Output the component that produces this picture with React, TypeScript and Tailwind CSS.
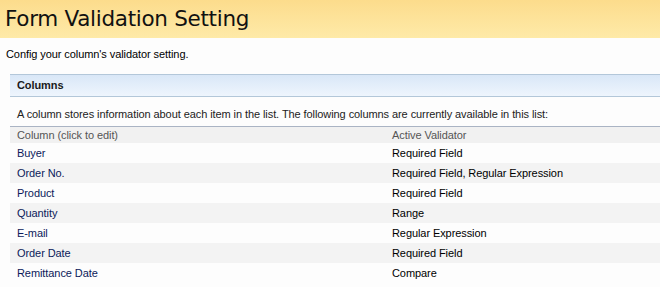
import React from 'react';

const rows = [
  { name: 'Buyer', validator: 'Required Field' },
  { name: 'Order No.', validator: 'Required Field, Regular Expression' },
  { name: 'Product', validator: 'Required Field' },
  { name: 'Quantity', validator: 'Range' },
  { name: 'E-mail', validator: 'Regular Expression' },
  { name: 'Order Date', validator: 'Required Field' },
  { name: 'Remittance Date', validator: 'Compare' },
];

export default function App() {
  return (
    <div className="w-[660px] h-[287px] overflow-hidden bg-[#fdfdfd] font-['Liberation_Sans',Arial,sans-serif] text-[11px] tracking-[-0.08px] text-black">
      {/* Title bar */}
      <div className="h-[38px] bg-gradient-to-b from-[#fcdc8c] to-[#feeaa8] pl-[5px] flex items-center">
        <h1 className="text-[21.5px] leading-none text-[#111] font-['DejaVu_Sans',sans-serif] tracking-[-0.3px]">Form Validation Setting</h1>
      </div>

      <p className="pl-[6px] pt-[8px] h-[36px]">Config your column's validator setting.</p>

      {/* Columns section */}
      <div className="ml-[10px] h-[23px] border-y border-[#b3c7d9] bg-gradient-to-b from-[#d9e7f7] to-[#eef5fd] pl-[7px] flex items-center">
        <span className="font-bold text-[#1a1a1a]">Columns</span>
      </div>

      <p className="pl-[17px] pt-[9px] h-[29px] text-[#222]">
        A column stores information about each item in the list. The following columns are currently available in this list:
      </p>

      <div className="ml-[10px] border-t border-[#aab4c4]">
        <div className="grid grid-cols-[382px_1fr] h-[16px] bg-[#f1f1f1] items-center text-[#555]">
          <span className="pl-[7px]">Column (click to edit)</span>
          <span>Active Validator</span>
        </div>
        {rows.map((r, i) => (
          <div
            key={r.name}
            className={`grid grid-cols-[382px_1fr] h-[20px] items-center ${i % 2 === 1 ? 'bg-[#f3f3f3]' : ''}`}
          >
            <span className="pl-[7px] text-[#0c1a5a]">{r.name}</span>
            <span>{r.validator}</span>
          </div>
        ))}
      </div>
    </div>
  );
}
